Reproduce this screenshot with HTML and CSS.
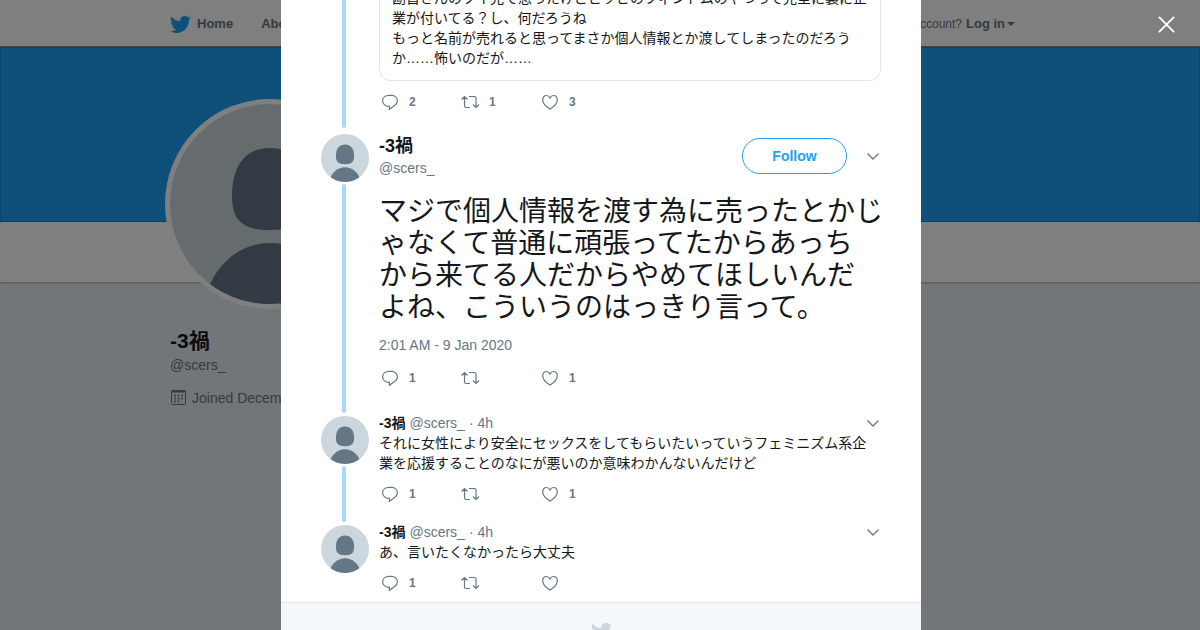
FILE: index.html
```html
<!DOCTYPE html>
<html lang="en">
<head>
<meta charset="UTF-8">
<meta name="viewport" content="width=device-width, initial-scale=1">
<title>-3禍 (@scers_)</title>
<link rel="stylesheet" href="styles.css">
</head>
<body>

<!-- shared icons -->
<svg class="sprite" aria-hidden="true">
  <symbol id="bird" viewBox="0 0 24 24">
    <path d="M23.95 4.57a10 10 0 0 1-2.82.77 4.96 4.96 0 0 0 2.16-2.72 9.9 9.9 0 0 1-3.12 1.19 4.92 4.92 0 0 0-8.39 4.48A13.93 13.93 0 0 1 1.64 3.16a4.92 4.92 0 0 0 1.52 6.57 4.9 4.9 0 0 1-2.23-.61v.06a4.92 4.92 0 0 0 3.95 4.83 5 5 0 0 1-2.21.08 4.94 4.94 0 0 0 4.6 3.42A9.87 9.87 0 0 1 0 19.54a13.99 13.99 0 0 0 7.55 2.21c9.05 0 14-7.5 14-13.98 0-.21 0-.42-.02-.63a9.94 9.94 0 0 0 2.46-2.55z"/>
  </symbol>
  <symbol id="person" viewBox="0 0 200 200">
    <path d="M100 44c24 0 38 17 38 48 0 23-9 34-38 34s-38-11-38-34c0-31 14-48 38-48z"/>
    <path d="M36 190c10-30 34-51 64-51s54 21 64 51v14H36z"/>
  </symbol>
  <symbol id="reply" viewBox="0 0 22 20">
    <path d="M10 3.300h2.500c3.300 0 5.900 2.300 5.900 5.400 0 2-1 3.500-2.800 4.700l-5.200 3.900v-3c-3.900.2-6.800-2.200-6.800-5.600 0-3.100 2.700-5.400 6.400-5.400z"/>
  </symbol>
  <symbol id="retweet" viewBox="0 0 22 20">
    <path d="M2.500 7.500l3-3 3 3M5.500 4.500v9.500q0 1.500 1.500 1.500h4M10 4.500h5.500q1.500 0 1.500 1.500v9.500M14 12.500l3 3 3-3"/>
  </symbol>
  <symbol id="heart" viewBox="0 0 22 20">
    <path d="M11 17C7.500 15 3.700 11.600 3.700 7.700c0-2.400 1.600-4.200 3.800-4.200 1.600 0 2.800.9 3.500 2.500.7-1.600 1.900-2.500 3.500-2.500 2.200 0 3.800 1.800 3.800 4.200 0 3.900-3.800 7.300-7.300 9.300z"/>
  </symbol>
  <symbol id="caret" viewBox="0 0 16 16">
    <path d="M2.500 5.500L8 11l5.500-5.500"/>
  </symbol>
</svg>

<header class="topbar">
  <nav class="container">
    <a class="nav-link home" href="#"><svg class="bird"><use href="#bird"/></svg>Home</a>
    <a class="nav-link" href="#">About</a>
    <div class="session">Have an account? <a href="#">Log in</a><i class="triangle"></i></div>
  </nav>
</header>

<div class="canopy"></div>
<div class="profile-nav"></div>

<main class="container profile">
  <div class="profile-avatar"><svg><use href="#person"/></svg></div>
  <h1>-3禍</h1>
  <a class="handle" href="#">@scers_</a>
  <p class="joined">
    <svg viewBox="0 0 18 18"><path d="M2.500 1.500h12q1 0 1 1v12q0 1-1 1h-12q-1 0-1-1v-12q0-1 1-1z"/><path class="top" d="M1.500 2.500h14"/><path class="dots" d="M8.500 6.500h.01M12 6.500h.01M5 9.500h.01M8.500 9.500h.01M12 9.500h.01M5 12.500h.01M8.500 12.500h.01M5 6.500h.01"/></svg>
    Joined December
  </p>
</main>

<div class="overlay">
  <button class="close" aria-label="Close"><svg viewBox="0 0 18 18"><path d="M1.500 1.500l15 15M16.500 1.500l-15 15"/></svg></button>

  <section class="modal">
    <article class="tweet">
      <div class="rail"><span class="thread"></span></div>
      <div class="content">
        <blockquote class="quote">勘首さんのツイ見て思ったけどピッピのフィンドムのやつって完全に裏に企業が付いてる？し、何だろうね<br>もっと名前が売れると思ってまさか個人情報とか渡してしまったのだろうか……怖いのだが……</blockquote>
        <div class="actions">
          <button aria-label="Reply"><svg><use href="#reply"/></svg>2</button>
          <button aria-label="Retweet"><svg><use href="#retweet"/></svg>1</button>
          <button aria-label="Like"><svg><use href="#heart"/></svg>3</button>
        </div>
      </div>
    </article>

    <article class="tweet main-tweet">
      <div class="rail">
        <svg class="avatar"><use href="#person"/></svg>
        <span class="thread"></span>
      </div>
      <div class="content">
        <div class="author">
          <div class="names">
            <a class="name" href="#">-3禍</a>
            <a class="handle" href="#">@scers_</a>
          </div>
          <button class="follow">Follow</button>
          <button class="more" aria-label="More"><svg><use href="#caret"/></svg></button>
        </div>
        <p class="big-text">マジで個人情報を渡す為に売ったとかじ<br>ゃなくて普通に頑張ってたからあっち<br>から来てる人だからやめてほしいんだ<br>よね、こういうのはっきり言って。</p>
        <div class="date">2:01 AM - 9 Jan 2020</div>
        <div class="actions">
          <button aria-label="Reply"><svg><use href="#reply"/></svg>1</button>
          <button aria-label="Retweet"><svg><use href="#retweet"/></svg></button>
          <button aria-label="Like"><svg><use href="#heart"/></svg>1</button>
        </div>
      </div>
    </article>

    <article class="tweet">
      <div class="rail">
        <svg class="avatar"><use href="#person"/></svg>
        <span class="thread"></span>
      </div>
      <div class="content">
        <div class="byline">
          <a class="name" href="#">-3禍</a>
          <a class="handle" href="#">@scers_</a>
          <span class="time">· 4h</span>
          <button class="more" aria-label="More"><svg><use href="#caret"/></svg></button>
        </div>
        <p class="text">それに女性により安全にセックスをしてもらいたいっていうフェミニズム系企業を応援することのなにが悪いのか意味わかんないんだけど</p>
        <div class="actions">
          <button aria-label="Reply"><svg><use href="#reply"/></svg>1</button>
          <button aria-label="Retweet"><svg><use href="#retweet"/></svg></button>
          <button aria-label="Like"><svg><use href="#heart"/></svg>1</button>
        </div>
      </div>
    </article>

    <article class="tweet last">
      <div class="rail">
        <svg class="avatar"><use href="#person"/></svg>
      </div>
      <div class="content">
        <div class="byline">
          <a class="name" href="#">-3禍</a>
          <a class="handle" href="#">@scers_</a>
          <span class="time">· 4h</span>
          <button class="more" aria-label="More"><svg><use href="#caret"/></svg></button>
        </div>
        <p class="text">あ、言いたくなかったら大丈夫</p>
        <div class="actions">
          <button aria-label="Reply"><svg><use href="#reply"/></svg>1</button>
          <button aria-label="Retweet"><svg><use href="#retweet"/></svg></button>
          <button aria-label="Like"><svg><use href="#heart"/></svg></button>
        </div>
      </div>
    </article>

    <footer class="modal-footer"><svg class="bird"><use href="#bird"/></svg></footer>
  </section>
</div>

</body>
</html>
```
FILE: styles.css
```css
* {
  box-sizing: border-box;
}
body {
  margin: 0;
  background: #e6ecf0;
  color: #14171a;
  font: 14px/20px "Liberation Sans", "Noto Sans CJK JP", sans-serif;
}
a {
  color: inherit;
  text-decoration: none;
}
p, h1, blockquote {
  margin: 0;
}
button {
  padding: 0;
  border: 0;
  background: none;
  color: inherit;
  font: inherit;
  cursor: pointer;
}
svg {
  display: block;
  flex: none;
}
.sprite {
  position: absolute;
  width: 0;
  height: 0;
}

/* --- page behind the dialog --- */
.container {
  max-width: 860px;
  margin: 0 auto;
}
.topbar {
  background: #fff;
  border-bottom: 1px solid #888;
}
.topbar .container {
  display: flex;
  align-items: center;
  height: 46px;
  padding-top: 2px;
  color: #66757f;
  font-size: 13px;
}
.nav-link {
  display: flex;
  align-items: center;
  margin-right: 28px;
  font-weight: bold;
}
.home .bird {
  width: 21px;
  height: 21px;
  margin-right: 6px;
  fill: #1da1f2;
}
.session {
  display: flex;
  align-items: center;
  margin-left: auto;
  padding-right: 15px;
  font-size: 12px;
}
.session a {
  margin-left: 4px;
  font-size: 13px;
  font-weight: bold;
}
.triangle {
  margin-left: 2px;
  border: 4px solid transparent;
  border-top-color: #66757f;
  border-bottom: 0;
}
.canopy {
  height: 175px;
  background: #1da1f2;
  border: 1px solid #1a84c5;
}
.profile-nav {
  height: 60px;
  background: #fff;
  box-shadow: 0 1px 2px rgba(0, 0, 0, .3);
}
.profile-avatar {
  position: relative;
  width: 210px;
  height: 210px;
  margin: -183px 0 0 -5px;
  border: 5px solid #fff;
  border-radius: 50%;
  background: #ccd6dd;
  overflow: hidden;
}
.profile-avatar svg {
  width: 200px;
  height: 200px;
  fill: #657786;
}
.profile h1 {
  margin: 19px 0 1px;
  font-size: 21px;
  line-height: 26px;
}
.profile .handle {
  display: block;
}
.handle, .time, .date {
  color: #657786;
}
.joined {
  display: flex;
  align-items: center;
  gap: 4px;
  margin-top: 13px;
  color: #657786;
}
.joined svg {
  width: 18px;
  height: 18px;
  fill: none;
  stroke: #657786;
}
.joined .top {
  stroke-width: 2;
}
.joined .dots {
  stroke-width: 2;
  stroke-linecap: round;
}

/* --- dialog --- */
.overlay {
  position: fixed;
  inset: 0;
  overflow: hidden;
  padding-left: 2px;
  background: rgba(0, 0, 0, .5);
}
.close {
  position: absolute;
  top: 16px;
  right: 25px;
}
.close svg {
  width: 17px;
  height: 17px;
  fill: none;
  stroke: #fff;
  stroke-width: 2;
  stroke-linecap: round;
}
.modal {
  max-width: 640px;
  margin: -12px auto 0;
  background: #fff;
}
.tweet {
  display: flex;
  gap: 10px;
  padding: 0 40px;
}
.rail {
  display: flex;
  flex-direction: column;
  align-items: center;
  width: 48px;
}
.avatar {
  width: 48px;
  height: 48px;
  margin: 3px 0 2px;
  border-radius: 50%;
  background: #ccd6dd;
  fill: #657786;
}
.main-tweet .avatar {
  margin-top: 6px;
}
.thread {
  flex: 1;
  width: 4px;
  margin-right: 2px;
  border-radius: 2px;
  background: #a5d9f9;
}
.content {
  flex: 1;
  min-width: 0;
  padding-bottom: 18px;
}
.quote {
  padding: 0 12px 12px;
  border: 1px solid #e1e8ed;
  border-top: 0;
  border-radius: 0 0 12px 12px;
}
.tweet:first-child .content {
  padding-bottom: 16px;
}
.name {
  font-weight: bold;
}
.author {
  display: flex;
  align-items: center;
  margin: 6px 0 18px;
}
.names {
  display: flex;
  flex: 1;
  flex-direction: column;
}
.names .name {
  font-size: 18px;
  line-height: 24px;
}
.follow {
  width: 105px;
  height: 36px;
  margin-right: 18px;
  border: 1px solid #1da1f2;
  border-radius: 18px;
  color: #1da1f2;
  font-weight: bold;
}
.more svg {
  width: 16px;
  height: 16px;
  fill: none;
  stroke: #657786;
  stroke-width: 1.3;
}
.big-text {
  font-size: 28px;
  line-height: 32px;
  white-space: nowrap;
}
.date {
  margin-top: 11px;
}
.main-tweet .content {
  padding-bottom: 25px;
}
.main-tweet .actions {
  margin-top: 13px;
}
.byline {
  display: flex;
  align-items: center;
  gap: 4px;
  height: 20px;
}
.byline .more {
  margin-left: auto;
}
.actions {
  display: flex;
  margin-top: 11px;
  color: #657786;
  font-size: 12px;
  font-weight: bold;
}
.actions button {
  display: flex;
  align-items: center;
  gap: 8px;
  width: 80px;
  height: 20px;
}
.actions svg {
  width: 22px;
  height: 20px;
  fill: none;
  stroke: #657786;
  stroke-width: 1.2;
}
.tweet .text {
  padding-right: 10px;
}
.tweet.last .content {
  padding-bottom: 9px;
}
.modal-footer {
  display: flex;
  justify-content: center;
  padding: 18px 0 40px;
  border-top: 1px solid #e1e8ed;
  background: #f5f8fa;
}
.modal-footer .bird {
  width: 21px;
  height: 21px;
  fill: #ccd6dd;
}
```
